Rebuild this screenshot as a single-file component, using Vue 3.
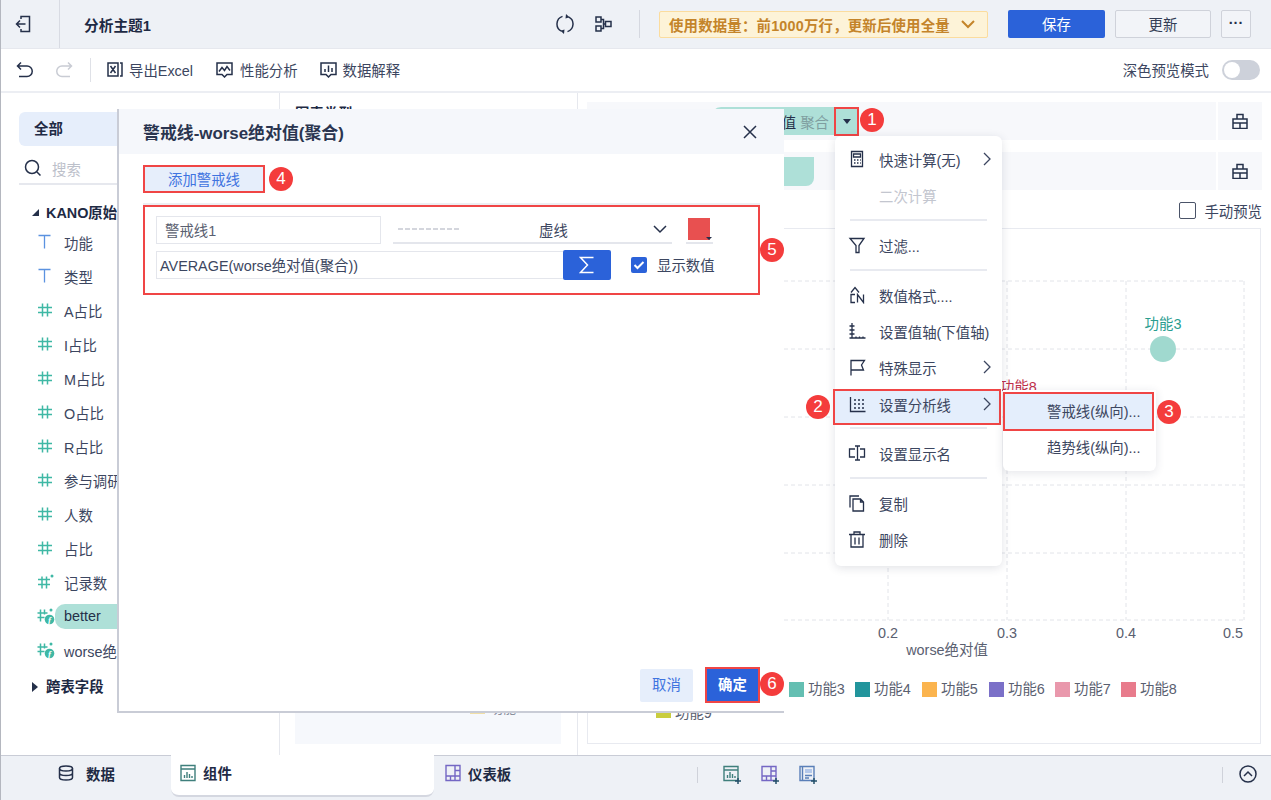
<script setup>
const icons = {
  calc: 'M3.5 1.5h11v15h-11z M5.5 4h7v3h-7z M6 10h1.5 M9 10h1.5 M12 10h.8 M6 13h1.5 M9 13h1.5 M12 13h.8',
  filter: 'M2 2.5h14L11 9.5v7H8v-7z',
  format: 'M7 8.5H3v8h4 M9.5 16.5v-8l6 8v-8 M3 6.5l4-5 4 5',
  axis: 'M4 1v15 M1.500 4h5 M1.500 8h5 M1.500 12h5 M1.500 16h16 M8 14.500v2 M11.500 14.500v2 M15 14.500v2',
  flag: 'M3 17.500V2.500h13.500l-3 4.500 2 5H3',
  analysis: 'M2.500 2v14.500h15 M6 5h2 M10 5h2 M14 5h2 M6 9h2 M10 9h2 M14 9h2 M6 13h2 M10 13h2 M14 13h2',
  rename: 'M7 5H1.500v8H7 M9.500 2v14 M7 2h5 M7 16h5 M12 5h4.500v8H12',
  copy: 'M2 13.500V2h9 M5 5h7.500l3 3v9H5z M12.500 5v3h3',
  trash: 'M1 4.500h16 M6 4.500V2h6v2.500 M3 4.500V17h12V4.500 M7 7.500v7 M11 7.500v7'
}
const menu = [
  { label: '快速计算(无)', icon: 'calc', arrow: true },
  { label: '二次计算', disabled: true },
  { divider: true },
  { label: '过滤...', icon: 'filter' },
  { divider: true },
  { label: '数值格式....', icon: 'format' },
  { label: '设置值轴(下值轴)', icon: 'axis' },
  { label: '特殊显示', icon: 'flag', arrow: true },
  { label: '设置分析线', icon: 'analysis', arrow: true, active: true },
  { divider: true },
  { label: '设置显示名', icon: 'rename' },
  { divider: true },
  { label: '复制', icon: 'copy' },
  { label: '删除', icon: 'trash' }
]
const fields = [
  { label: '功能', type: 'text' }, { label: '类型', type: 'text' },
  { label: 'A占比', type: 'num' }, { label: 'I占比', type: 'num' },
  { label: 'M占比', type: 'num' }, { label: 'O占比', type: 'num' },
  { label: 'R占比', type: 'num' }, { label: '参与调研人数', type: 'num' },
  { label: '人数', type: 'num' }, { label: '占比', type: 'num' },
  { label: '记录数', type: 'star' },
  { label: 'better', type: 'calc', chip: true },
  { label: 'worse绝对值', type: 'calc' }
]
const hLines = [281, 349, 417, 485, 553, 620]
const vLines = [888, 1007, 1126, 1244]
const ticks = [{ x: 888, t: '0.2' }, { x: 1007, t: '0.3' }, { x: 1126, t: '0.4' }, { x: 1233, t: '0.5' }]
const legend = [
  { x: 789, c: '#64bfb2', t: '功能3' }, { x: 855, c: '#22959c', t: '功能4' },
  { x: 922, c: '#fbb44e', t: '功能5' }, { x: 989, c: '#7b70c8', t: '功能6' },
  { x: 1055, c: '#e998ac', t: '功能7' }, { x: 1121, c: '#e87b8c', t: '功能8' }
]
const badges = [1, 2, 3, 4, 5, 6]
</script>

<template>
  <div class="page">
    <header class="head">
      <div class="back">
        <svg width="16" height="18" viewBox="0 0 16 18" class="line"><path d="M6 4V1.500h8.500v15H6V14 M10.500 9H1.500m3.500-3.500L1.500 9 5 12.500"/></svg>
      </div>
      <div class="title">分析主题1</div>
      <svg class="line refresh" width="18" height="20" viewBox="0 0 18 20"><path d="M6.500 2.400A8 8 0 0 0 5.500 17.200 M11.500 17.600A8 8 0 0 0 12.500 2.800"/><path class="solid" d="M10 0l3.500 3.200L9.500 4.500z M8 20l-3.500-3.200 4-1.300z"/></svg>
      <svg class="line flow" width="17" height="16" viewBox="0 0 17 16"><path d="M1 1h5v5H1z M1 10h5v5H1z M6 3.500h2.500v9H6 M8.500 8h2 M10.500 5.500h5.500v5h-5.500z"/></svg>
      <div class="vsep"></div>
      <div class="notice">
        <span>使用数据量：前1000万行，更新后使用全量</span>
        <svg width="14" height="9" viewBox="0 0 14 9" class="notice-chev"><path d="M1 1l6 6 6-6"/></svg>
      </div>
      <button class="btn primary">保存</button>
      <button class="btn plain">更新</button>
      <button class="btn more">···</button>
    </header>

    <div class="tools">
      <svg class="line undo" width="18" height="18" viewBox="0 0 18 18"><path d="M5 1.500 1.500 5 5 8.500 M1.500 5H11a4.800 4.800 0 0 1 0 10.500H3"/></svg>
      <svg class="line redo" width="18" height="18" viewBox="0 0 18 18"><path d="M13 1.500 16.500 5 13 8.500 M16.500 5H7a4.800 4.800 0 0 0 0 10.500h8"/></svg>
      <div class="tsep"></div>
      <div class="tool t1">
        <svg class="line" width="16" height="15" viewBox="0 0 16 15"><path d="M1 1h10v13H1z M3.500 4l5 7 M8.500 4l-5 7 M13 1h2v13h-2"/></svg>
        <span>导出Excel</span>
      </div>
      <div class="tool t2">
        <svg class="line" width="17" height="16" viewBox="0 0 17 16"><path d="M1 1h15v11.500h-5L8.500 15 6 12.500H1z M3 9.500l3-4 2.500 3 2.500-4 3 4"/></svg>
        <span>性能分析</span>
      </div>
      <div class="tool t3">
        <svg class="line" width="17" height="16" viewBox="0 0 17 16"><path d="M1 1h15v11.500h-5L8.500 15 6 12.500H1z M5 7v3 M8.500 3.500V10 M12 6v4"/></svg>
        <span>数据解释</span>
      </div>
      <div class="dark">深色预览模式</div>
      <div class="toggle"><i></i></div>
    </div>

    <main class="main">
      <aside class="side">
        <div class="tab">全部</div>
        <div class="search">
          <svg class="line" width="18" height="18" viewBox="0 0 18 18"><circle cx="8" cy="8" r="6.500"/><path d="M13 13l3.500 3.500"/></svg>
          <span>搜索</span>
        </div>
        <div class="group kano"><i class="tri tri-down"></i>KANO原始数据</div>
        <div v-for="f in fields" :key="f.label" class="field">
          <svg width="18" height="18" viewBox="0 0 18 18" class="ficon" :class="f.type">
            <path v-if="f.type === 'text'" d="M1.500 2.500h12 M7.500 2.500v13"/>
            <path v-else-if="f.type === 'num'" d="M1 6.500h14 M1 11.500h14 M5.500 2.500v13 M10.500 2.500v13"/>
            <template v-else-if="f.type === 'star'">
              <path d="M1 6.500h12 M1 11.500h12 M5 3.500v12 M9.500 3.500v12"/>
              <circle cx="15" cy="3" r="1.500" class="dot"/>
            </template>
            <template v-else>
              <path d="M.5 6h10 M.5 10.500h7 M3.500 2.500v12 M7.500 2.500v5"/>
              <circle cx="14" cy="3" r="1.500" class="dot"/>
              <circle cx="12.500" cy="12.500" r="4.800" class="dot"/>
              <text x="12.500" y="16" text-anchor="middle" class="fx">f</text>
            </template>
          </svg>
          <span :class="{ chip: f.chip }">{{ f.label }}</span>
        </div>
        <div class="group cross"><i class="tri tri-right"></i>跨表字段</div>
      </aside>

      <section class="mid">
        <div class="mid-title">图表类型</div>
        <div class="mid-panel">
          <div class="mid-legend"><i></i><span>功能1</span></div>
        </div>
      </section>

      <section class="rightcol">
        <div class="shelf first">
          <div class="pill">
            <span class="pill-name">worse绝对值</span>
            <span class="pill-agg">聚合</span>
            <span class="drop"><i></i></span>
          </div>
          <div class="shelf-end">
            <svg class="line" width="16" height="16" viewBox="0 0 16 16"><path d="M1 6h14v9.500H1z M5 6V1.500h6V6 M1 10h14 M8 10v5.500"/></svg>
          </div>
        </div>
        <div class="shelf second">
          <div class="pill small"><span class="pill-name">better</span></div>
          <div class="shelf-end">
            <svg class="line" width="16" height="16" viewBox="0 0 16 16"><path d="M1 6h14v9.500H1z M5 6V1.500h6V6 M1 10h14 M8 10v5.500"/></svg>
          </div>
        </div>
        <div class="manual"><i></i><span>手动预览</span></div>
        <div class="chart">
          <svg class="plot" width="674" height="516" viewBox="587 228 674 516">
            <line v-for="y in hLines" :key="'h' + y" :x1="770" :x2="1244" :y1="y" :y2="y" class="grid"/>
            <line v-for="x in vLines" :key="'v' + x" :x1="x" :x2="x" :y1="281" :y2="620" class="grid"/>
            <circle cx="1163" cy="349" r="13" fill="#a0d9cf"/>
            <text x="1163" y="329" text-anchor="middle" class="lab3">功能3</text>
            <text x="1000" y="392" class="lab8">功能8</text>
            <text v-for="t in ticks" :key="t.t" :x="t.x" y="638" text-anchor="middle" class="tick">{{ t.t }}</text>
            <text x="947" y="655" text-anchor="middle" class="tick">worse绝对值</text>
            <template v-for="l in legend" :key="l.t">
              <rect :x="l.x" y="682" width="15" height="15" :fill="l.c"/>
              <text :x="l.x + 19" y="694" class="tick">{{ l.t }}</text>
            </template>
            <rect x="656" y="706" width="15" height="12" fill="#c9cd3e"/>
            <text x="675" y="718" class="tick">功能9</text>
          </svg>
        </div>
      </section>
    </main>

    <footer class="foot">
      <div class="ftab data">
        <svg class="line" width="16" height="16" viewBox="0 0 16 16"><ellipse cx="8" cy="3.500" rx="6.500" ry="2.500"/><path d="M1.500 3.500v9c0 1.400 2.900 2.500 6.500 2.500s6.500-1.100 6.500-2.500v-9 M1.500 8c0 1.400 2.900 2.500 6.500 2.500s6.500-1.100 6.500-2.500"/></svg>
        <span>数据</span>
      </div>
      <div class="ftab comp">
        <svg class="tabic green" width="16" height="18" viewBox="0 0 16 18"><path d="M1 1.500h14v15H1z M1 5h14 M4.500 14v-3 M7 14V8 M9.500 14v-4 M12 14v-2"/></svg>
        <span>组件</span>
      </div>
      <div class="ftab dash">
        <svg class="tabic purple" width="16" height="18" viewBox="0 0 16 18"><path d="M1 1.500h14v15H1z M1 12h14 M10 1.500V16.500 M10 6.500h5 M5.500 12v4.500"/></svg>
        <span>仪表板</span>
      </div>
      <div class="fsep a"></div>
      <svg class="tabic green add" width="20" height="20" viewBox="0 0 20 20"><path d="M1 1.500h14v14H1z M1 5h14 M4.500 13v-3 M7 13V7 M9.500 13v-4 M12 13v-2"/><path class="plus" d="M15 13v6 M12 16h6"/></svg>
      <svg class="tabic purple add" width="20" height="20" viewBox="0 0 20 20"><path d="M1 1.500h14v14H1z M1 11h14 M10 1.500V15.500 M10 6h5 M5.500 11v4.500"/><path class="plus" d="M15 13v6 M12 16h6"/></svg>
      <svg class="tabic blue add" width="20" height="20" viewBox="0 0 20 20"><path d="M1 1.500h14v14H1z M3.500 1.500v14 M6 10.500h7 M6 13h4"/><rect x="6" y="4" width="7" height="4" class="bluefill"/><path class="plus" d="M15 13v6 M12 16h6"/></svg>
      <div class="fsep b"></div>
      <svg class="line up" width="18" height="18" viewBox="0 0 18 18"><circle cx="9" cy="9" r="8"/><path d="M5 11l4-4 4 4"/></svg>
    </footer>

    <div class="modal">
      <div class="modal-head">
        <span>警戒线-worse绝对值(聚合)</span>
        <svg class="line" width="14" height="14" viewBox="0 0 14 14"><path d="M1 1l12 12 M13 1 1 13"/></svg>
      </div>
      <div class="modal-body">
        <div class="add-btn">添加警戒线</div>
        <div class="rule">
          <div class="rule-row">
            <div class="input name">警戒线1</div>
            <div class="select">
              <i class="dash-preview"></i>
              <span>虚线</span>
              <svg width="14" height="9" viewBox="0 0 14 9" class="line"><path d="M1 1l6 6 6-6"/></svg>
            </div>
            <div class="swatch"><i></i></div>
          </div>
          <div class="rule-row second-row">
            <div class="input formula">AVERAGE(worse绝对值(聚合))</div>
            <div class="sigma">
              <svg width="16" height="18" viewBox="0 0 16 18"><path d="M14.500 1.500H1.500L8.500 9l-7 7.500h13"/></svg>
            </div>
            <div class="check">
              <svg width="16" height="16" viewBox="0 0 16 16"><rect width="16" height="16" rx="2" fill="#2b62d9"/><path d="M3.500 8l3 3 6-6" fill="none" stroke="#fff" stroke-width="2"/></svg>
              <span>显示数值</span>
            </div>
          </div>
        </div>
        <div class="modal-foot">
          <div class="cancel">取消</div>
          <div class="ok">确定</div>
        </div>
      </div>
    </div>

    <div class="menu">
      <template v-for="(m, i) in menu" :key="i">
        <div v-if="m.divider" class="mdiv"><i></i></div>
        <div v-else class="mitem" :class="{ disabled: m.disabled, active: m.active }">
          <svg class="micon" width="18" height="18" viewBox="0 0 18 18"><path v-if="m.icon" :d="icons[m.icon]"/></svg>
          <span>{{ m.label }}</span>
          <svg v-if="m.arrow" class="marrow" width="8" height="14" viewBox="0 0 8 14"><path d="M1 1l6 6-6 6"/></svg>
        </div>
      </template>
    </div>

    <div class="submenu">
      <div class="sitem hot">警戒线(纵向)...</div>
      <div class="sitem">趋势线(纵向)...</div>
    </div>

    <div v-for="b in badges" :key="b" class="badge" :class="'b' + b">{{ b }}</div>
  </div>
</template>

<style>
html, body { margin: 0; background: #fff; }
</style>

<style scoped>
.page {
  position: relative; width: 1271px; height: 800px; overflow: hidden; box-sizing: border-box;
  display: flex; flex-direction: column; border-left: 1px solid #b4b7bf;
  font: 14.4px "Liberation Sans", "Noto Sans CJK SC", sans-serif; color: #3c4660; background: #fff;
}
svg { display: block; flex: none; }
.line { fill: none; stroke: #25304a; stroke-width: 1.500; }
.solid { fill: #25304a; stroke: none; }

.head { flex: none; height: 49px; box-sizing: border-box; display: flex; align-items: center; background: #eef1f6; border-bottom: 1px solid #e6e8ee; padding-right: 20px; }
.back { width: 59px; height: 48px; box-sizing: border-box; border-right: 1px solid #d8dbe3; display: flex; align-items: center; justify-content: center; padding-right: 14px; }
.title { margin-left: 24px; font-size: 14.700px; font-weight: 700; color: #1e2a44; }
.refresh { margin-left: auto; }
.flow { margin-left: 21px; }
.vsep { width: 1px; height: 28px; background: #d5d8e0; margin: 0 19px 0 27px; }
.notice { width: 329px; height: 27px; box-sizing: border-box; display: flex; align-items: center; justify-content: space-between; padding: 0 12px 0 9px; background: #fdf3d8; border: 1px solid #fbdc9e; border-radius: 2px; color: #c4842a; font-weight: 700; letter-spacing: .2px; margin-right: 20px; }
.notice-chev { fill: none; stroke: #c4842a; stroke-width: 2; }
.btn { font: inherit; height: 28px; box-sizing: border-box; border-radius: 2px; padding: 0 0 2px; }
.primary { width: 97px; background: #2b62d9; border: 0; color: #fff; margin-right: 10px; }
.plain { width: 96px; background: #f2f4f8; border: 1px solid #cfd2da; color: #333d55; margin-right: 10px; }
.more { width: 30px; background: #f2f4f8; border: 1px solid #cfd2da; color: #25304a; font-weight: 700; }

.tools { flex: none; height: 44px; box-sizing: border-box; display: flex; align-items: center; border-bottom: 2px solid #eceef3; padding: 0 11px 1px 15px; }
.redo { stroke: #c9ccd4; margin-left: 21px; }
.tsep { width: 1px; height: 24px; background: #dfe1e7; margin: 0 16px 0 17px; }
.tool { display: flex; align-items: center; gap: 6px; }
.t2 { margin-left: 23px; gap: 7px; }
.t3 { margin-left: 22px; gap: 6px; }
.dark { margin-left: auto; }
.toggle { width: 38px; height: 20px; border-radius: 10px; background: #cdd1da; margin-left: 13px; position: relative; }
.toggle i { position: absolute; left: 2px; top: 2px; width: 16px; height: 16px; border-radius: 50%; background: #fff; }

.main { flex: 1; min-height: 0; display: flex; }
.side { width: 279px; box-sizing: border-box; flex: none; border-right: 1px solid #e6e8ee; padding: 19px 0 0 18px; overflow: hidden; white-space: nowrap; }
.tab { width: 120px; height: 34px; line-height: 34px; padding-left: 15px; box-sizing: border-box; border-radius: 6px 0 0 6px; background: #e6eefb; font-weight: 700; color: #1e2a44; }
.search { width: 170px; height: 32px; margin-top: 7px; border-bottom: 2px solid #e6e8ee; display: flex; align-items: center; gap: 10px; padding-left: 5px; box-sizing: border-box; color: #bcc0ca; }
.group { height: 26px; line-height: 26px; margin-top: 15px; padding-left: 27px; position: relative; font-weight: 700; color: #1e2a44; }
.kano { height: 25px; }
.cross { margin-top: 7px; }
.tri { position: absolute; left: 13px; top: 9px; width: 0; height: 0; }
.tri-down { border-left: 7px solid transparent; border-bottom: 7px solid #25304a; }
.tri-right { border-left: 6px solid #25304a; border-top: 5px solid transparent; border-bottom: 5px solid transparent; top: 8px; }
.field { height: 34px; display: flex; align-items: center; padding-left: 18px; gap: 9px; }
.ficon { fill: none; stroke-width: 1.500; }
.ficon.text { stroke: #5b92e0; stroke-width: 1.300; }
.ficon.num, .ficon.star, .ficon.calc { stroke: #3fb8a5; }
.dot { fill: #3fb8a5; stroke: none; }
.fx { font: italic 700 9px "Liberation Serif", serif; fill: #fff; stroke: none; }
.chip { background: #aee0d8; height: 25px; line-height: 25px; width: 120px; padding-left: 9px; margin-left: -9px; border-radius: 10px 0 0 10px; color: #25304a; }

.mid { width: 298px; flex: none; box-sizing: border-box; border-right: 1px solid #e6e8ee; padding: 9px 16px 11px 15px; display: flex; flex-direction: column; }
.mid-title { height: 28px; font-weight: 700; color: #1e2a44; }
.mid-panel { flex: 1; background: #f6f8fc; padding: 568px 0 0 175px; box-sizing: border-box; }
.mid-legend { display: flex; align-items: center; gap: 5px; font-size: 13px; color: #8a8f9c; }
.mid-legend i { width: 15px; height: 12px; background: #f1dfa6; }

.rightcol { flex: 1; min-width: 0; padding: 9px 9px 11px 9px; display: flex; flex-direction: column; }
.shelf { height: 38px; background: #f7f8fb; display: flex; align-items: center; position: relative; }
.second { margin-top: 12px; }
.pill { margin-left: 124px; width: 148px; height: 28px; border-radius: 10px 0 0 10px; background: #aee0d8; display: flex; align-items: center; justify-content: flex-end; gap: 4px; color: #25304a; white-space: nowrap; }
.pill-agg { color: #7f9ea0; }
.drop { width: 25px; height: 29px; box-sizing: border-box; border: 2px solid #f04545; display: flex; align-items: center; justify-content: center; margin-left: 1px; }
.drop i { width: 0; height: 0; border-left: 4px solid transparent; border-right: 4px solid transparent; border-top: 5px solid #25304a; }
.pill.small { width: 103px; height: 29px; border-radius: 0 0 8px 0; justify-content: flex-start; padding-left: 10px; box-sizing: border-box; }
.shelf-end { margin-left: auto; width: 44px; height: 100%; border-left: 2px solid #fff; display: flex; align-items: center; justify-content: center; }
.manual { flex: none; height: 38px; display: flex; align-items: center; justify-content: flex-end; gap: 8px; padding-top: 2px; box-sizing: border-box; white-space: nowrap; }
.manual i { width: 17px; height: 17px; box-sizing: border-box; border: 1.500px solid #4a5368; border-radius: 2px; }
.chart { flex: 1; border: 1px solid #e8eaf0; box-sizing: border-box; margin-right: 1px; overflow: hidden; }
.plot { margin: -1px; }
.grid { stroke: #e2e4e9; stroke-width: 1; stroke-dasharray: 4 3; }
.tick { font: 14.400px "Liberation Sans", "Noto Sans CJK SC", sans-serif; fill: #5a6070; }
.lab3 { font: 14.400px "Liberation Sans", "Noto Sans CJK SC", sans-serif; fill: #2a9d8f; }
.lab8 { font: 14.400px "Liberation Sans", "Noto Sans CJK SC", sans-serif; fill: #c0304a; }

.foot { flex: none; height: 45px; box-sizing: border-box; background: #eef1f6; border-top: 1px solid #c9ccd6; display: flex; align-items: flex-start; }
.ftab { height: 41px; display: flex; align-items: center; font-weight: 700; color: #1e2a44; box-sizing: border-box; padding-bottom: 7px; }
.data { width: 170px; padding-left: 57px; gap: 12px; }
.comp { width: 263px; padding-left: 9px; gap: 7px; background: #fff; border-radius: 0 0 8px 8px; border-bottom: 2px solid #d4d7e0; margin-top: -1px; height: 42px; padding-bottom: 5px; }
.dash { padding-left: 11px; gap: 7px; }
.tabic { fill: none; stroke-width: 1.400; }
.green { stroke: #3f7f7c; }
.purple { stroke: #7467c4; }
.blue { stroke: #5a7fb8; }
.bluefill { fill: #b4c8ea; stroke: none; }
.plus { stroke: #24506a; stroke-width: 1.500; }
.fsep { width: 1px; height: 16px; background: #cfd2da; margin-top: 11px; }
.fsep.a { margin-left: 186px; }
.add { margin-top: 9px; margin-left: 18px; }
.fsep.a + .add { margin-left: 25px; }
.fsep.b { margin-left: 403px; }
.up { margin-left: 16px; margin-top: 9px; }

.modal { position: absolute; left: 116px; top: 109px; width: 667px; height: 604px; box-sizing: border-box; background: #fff; border-left: 2px solid #c9ccd6; border-bottom: 2px solid #c9ccd6; display: flex; flex-direction: column; }
.modal-head { height: 45px; flex: none; background: #f5f7fb; display: flex; align-items: center; justify-content: space-between; padding: 0 27px 0 24px; font-size: 16.900px; font-weight: 700; color: #2a3550; }
.modal-body { flex: 1; display: flex; flex-direction: column; padding: 11px 24px 8px 24px; min-height: 0; }
.add-btn { width: 118px; height: 24px; line-height: 27px; text-align: center; background: #e6eefb; border: 2px solid #f04545; color: #3f74e0; }
.rule { margin-top: 12px; height: 90px; box-sizing: border-box; border: 2px solid #f04545; box-shadow: 0 -2px 0 #eceef2; padding: 9px 11px; }
.rule-row { display: flex; align-items: center; height: 28px; }
.second-row { margin-top: 7px; }
.input { height: 28px; box-sizing: border-box; border: 1.500px solid #e4e6ec; display: flex; align-items: center; white-space: nowrap; padding-bottom: 2px; }
.name { width: 225px; padding-left: 8px; color: #5a6070; }
.formula { width: 407px; padding-left: 3px; border-right: 0; color: #3c4660; }
.select { width: 279px; height: 28px; margin-left: 12px; box-sizing: border-box; border-bottom: 2px solid #e4e6ec; display: flex; align-items: center; padding: 0 5px; position: relative; }
.dash-preview { width: 62px; height: 2px; background: repeating-linear-gradient(90deg, #d4d6dd 0 5px, transparent 5px 7px); }
.select span { margin-left: 79px; }
.select svg { margin-left: auto; }
.swatch { width: 27px; height: 27px; margin-left: 14px; border-bottom: 2px solid #e4e6ec; box-sizing: border-box; padding: 1px 0 0 2px; position: relative; }
.swatch i { display: block; width: 22px; height: 22px; background: #e85050; }
.swatch::after { content: ""; position: absolute; left: 20px; top: 20px; border-left: 3px solid transparent; border-right: 3px solid transparent; border-top: 3px solid #25304a; }
.sigma { width: 48px; height: 30px; background: #2b62d9; border-radius: 2px; display: flex; align-items: center; justify-content: center; }
.sigma svg { fill: none; stroke: #fff; stroke-width: 1.500; }
.check { display: flex; align-items: center; gap: 10px; margin-left: 20px; }
.check span { margin-top: -2px; }
.modal-foot { margin-top: auto; display: flex; align-items: center; justify-content: flex-end; gap: 12px; }
.cancel { width: 53px; height: 33px; line-height: 33px; text-align: center; background: #e6eefb; color: #3f74e0; border-radius: 2px; }
.ok { width: 51px; height: 32px; line-height: 32px; text-align: center; background: #2b62d9; border: 2px solid #f04545; color: #fff; font-weight: 700; }

.menu { position: absolute; left: 834px; top: 136px; width: 167px; box-sizing: border-box; padding: 5px 0 9px; background: #fff; border-radius: 6px; box-shadow: 0 2px 10px rgba(40, 50, 80, .14); }
.mitem { height: 36px; display: flex; align-items: center; padding-left: 13px; gap: 13px; position: relative; color: #3c4660; box-sizing: border-box; }
.micon { fill: none; stroke: #25304a; stroke-width: 1.300; }
.marrow { position: absolute; left: 148px; fill: none; stroke: #3c4660; stroke-width: 1.300; }
.disabled { color: #c3c6cf; }
.active { height: 34px; background: #e4eefc; outline: 2px solid #f04545; outline-offset: -1px; margin: 5px 2px -3px -1px; padding: 0 0 6px 14px; }
.active .marrow { left: 149px; top: 7px; }
.mdiv { height: 14px; display: flex; align-items: center; padding: 0 15px; }
.mdiv i { display: block; flex: 1; height: 2px; background: #e8eaf0; }

.submenu { position: absolute; left: 1002px; top: 390px; width: 153px; height: 81px; padding-top: 2px; box-sizing: border-box; background: #fff; border-radius: 0 0 6px 6px; box-shadow: 0 2px 10px rgba(40, 50, 80, .12); }
.sitem { height: 36px; line-height: 36px; padding-left: 44px; white-space: nowrap; margin-top: -1px; }
.hot { height: 39px; line-height: 37px; box-sizing: border-box; background: #e4eefc; border: 2px solid #f04545; padding-left: 42px; width: 151px; margin-top: 0; }

.badge { position: absolute; width: 24px; height: 24px; line-height: 24px; border-radius: 50%; background: #f43c3c; color: #fff; text-align: center; font-size: 17px; }
.b1 { left: 859px; top: 108px; }
.b2 { left: 805px; top: 395px; }
.b3 { left: 1156px; top: 400px; }
.b4 { left: 268px; top: 167px; }
.b5 { left: 759px; top: 238px; }
.b6 { left: 759px; top: 672px; }
</style>
